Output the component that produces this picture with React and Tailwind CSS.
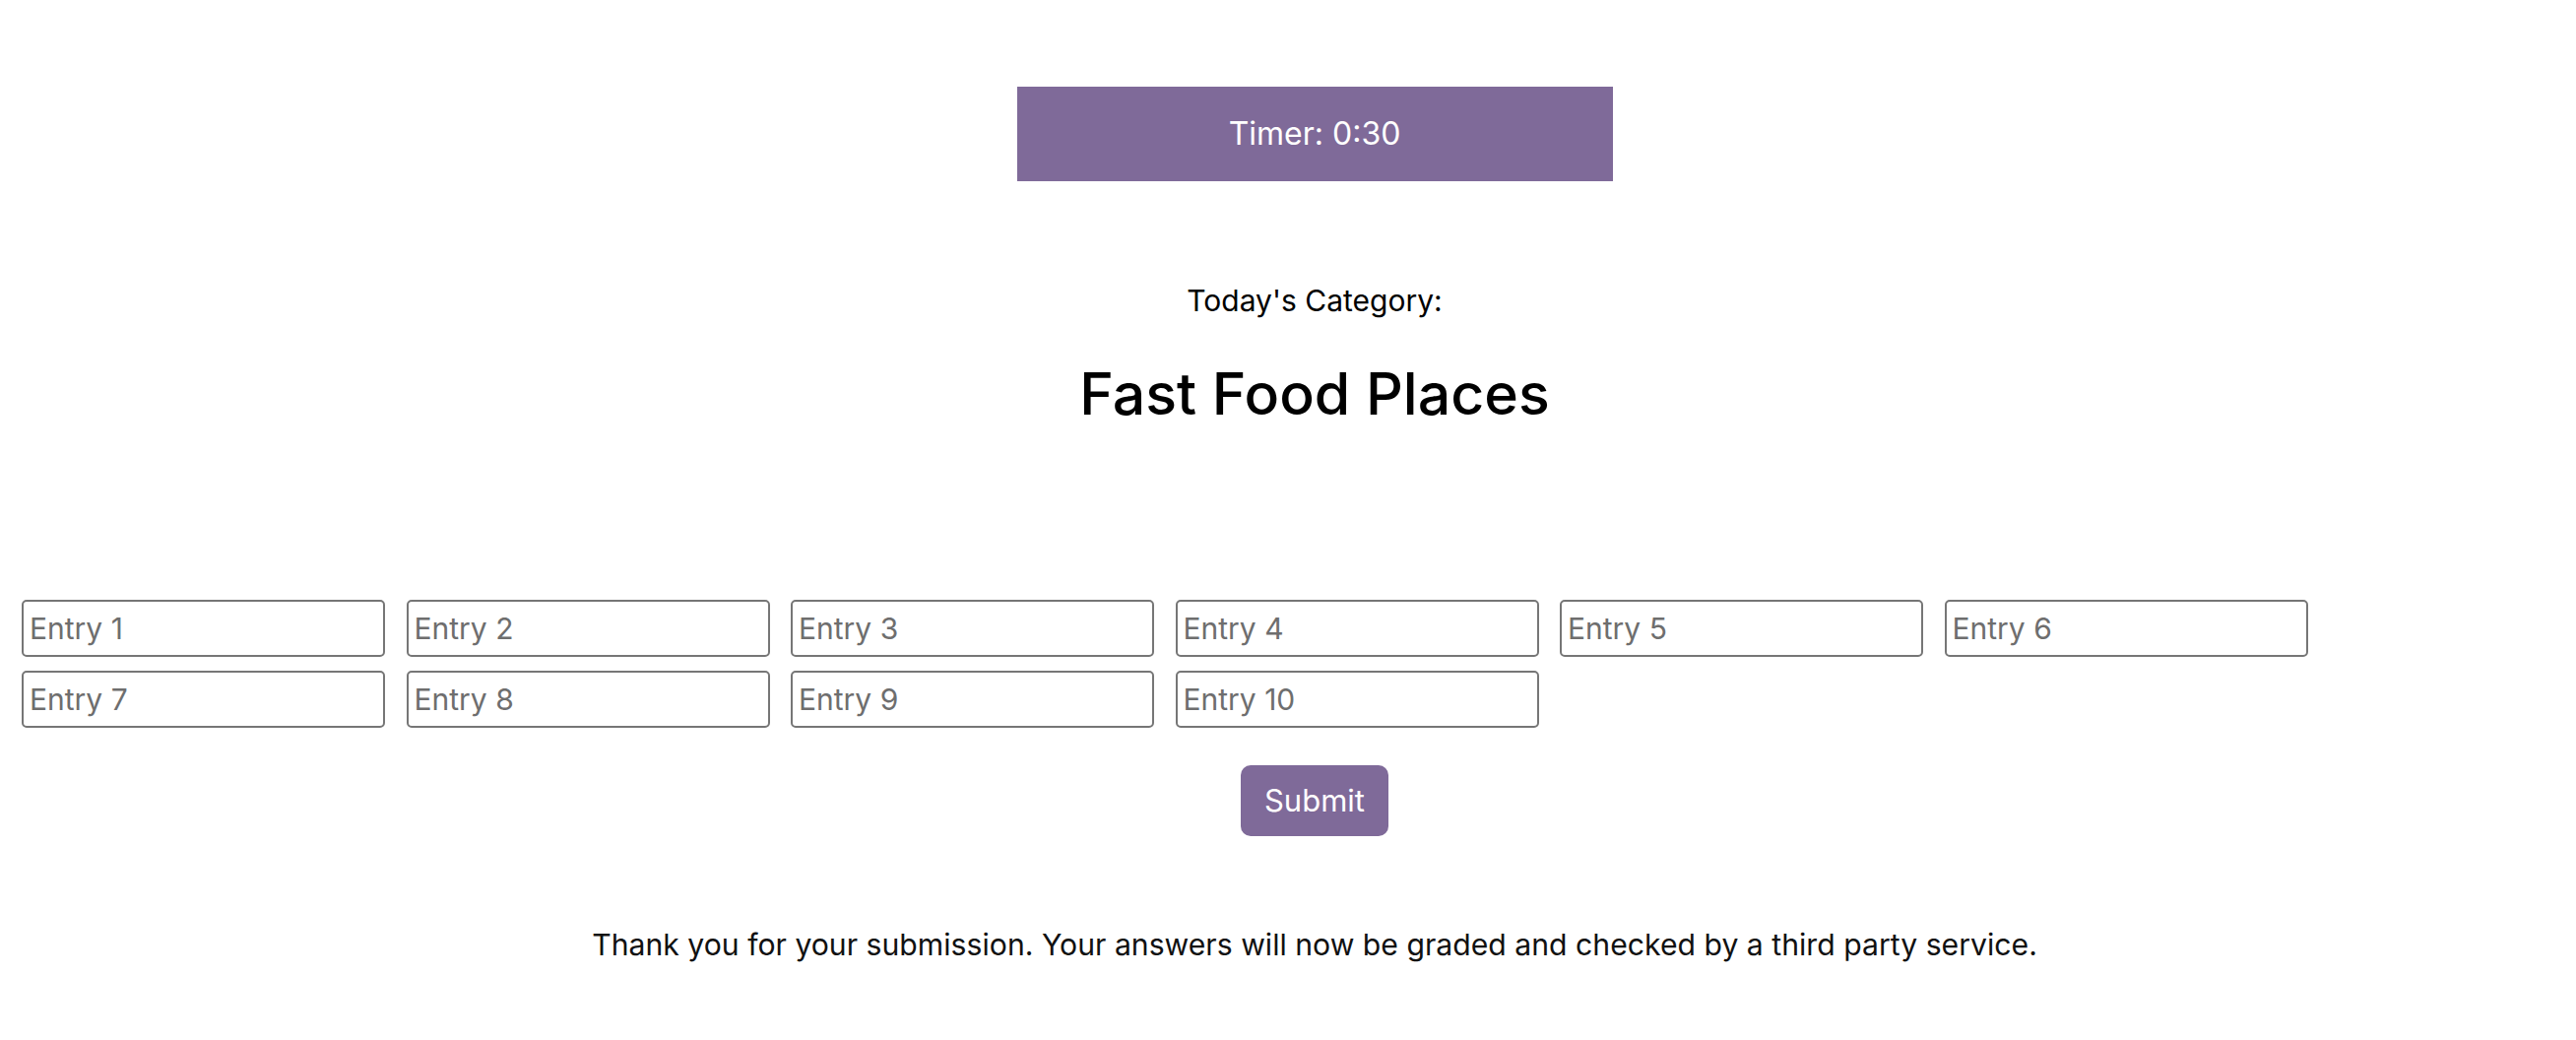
import { useState } from 'react'

export default function App() {
  const [entries, setEntries] = useState(Array(10).fill(''))

  const update = (i, v) => {
    const next = [...entries]
    next[i] = v
    setEntries(next)
  }

  return (
    <div className="min-h-screen bg-white font-['Inter','Noto_Sans',sans-serif] text-black">
      <div className="pl-[54px] pt-[88px] flex flex-col items-center">
        <div className="w-[605px] h-[96px] bg-[#7f6a99] flex items-center justify-center text-white text-[32px]">
          Timer: 0:30
        </div>
        <p className="mt-[101px] text-[30px] leading-[40px]">Today's Category:</p>
        <h1 className="mt-[35px] text-[59px] leading-[80px] font-medium">Fast Food Places</h1>
      </div>

      <div className="mt-[169px] px-[22px] flex flex-wrap gap-x-[21.5px] gap-y-[14px]">
        {entries.map((val, i) => (
          <input
            key={i}
            value={val}
            onChange={e => update(i, e.target.value)}
            placeholder={`Entry ${i + 1}`}
            className="w-[369px] h-[58px] border-2 border-[#767676] rounded-[5px] px-[6px] text-[30px] placeholder:text-[#6e6e6e] outline-none"
          />
        ))}
      </div>

      <div className="pl-[54px] flex flex-col items-center">
        <button className="mt-[38px] w-[150px] h-[72px] rounded-[10px] bg-[#7f6a99] text-white text-[31px]">
          Submit
        </button>
        <p className="mt-[90px] text-[30.2px] leading-[40px] text-[#111]">
          Thank you for your submission. Your answers will now be graded and checked by a third party service.
        </p>
      </div>
    </div>
  )
}
